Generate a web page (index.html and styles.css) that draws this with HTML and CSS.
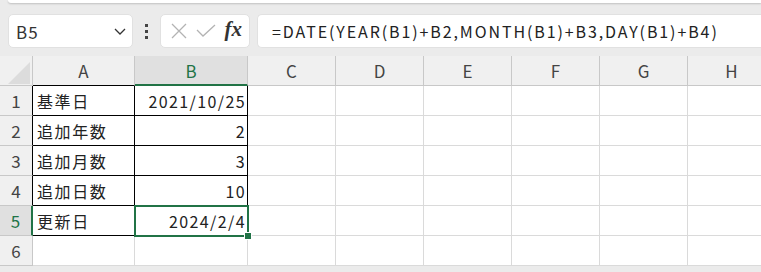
FILE: index.html
```html
<!DOCTYPE html>
<html>
<head>
    <title>Sheet</title>
    <link rel="stylesheet" href="styles.css">
</head>
<body>
<div class="ribbon-edge"></div>

<div class="toolbar">
    <div class="name-box">
        <span class="name-text">B5</span>
        <svg class="chevron" width="12" height="7" viewBox="0 0 12 7"><path d="M1 1 L6 6 L11 1" fill="none" stroke="#333" stroke-width="1.3"/></svg>
    </div>
    <div class="more">
        <span></span><span></span><span></span>
    </div>
    <div class="fx-box">
        <svg width="16" height="16" viewBox="0 0 16 16"><path d="M1 1 L15 15 M15 1 L1 15" stroke="#b3b3b3" stroke-width="1.3"/></svg>
        <svg width="20" height="14" viewBox="0 0 20 14"><path d="M1 6 L7 12 L19 1" fill="none" stroke="#b3b3b3" stroke-width="1.3"/></svg>
        <span class="fx">fx</span>
    </div>
    <div class="formula">=DATE(YEAR(B1)+B2,MONTH(B1)+B3,DAY(B1)+B4)</div>
</div>

<table class="sheet">
    <tr class="head">
        <th class="corner"><div class="tri"></div></th>
        <th class="col-a">A</th>
        <th class="col-b sel">B</th>
        <th>C</th>
        <th>D</th>
        <th>E</th>
        <th>F</th>
        <th>G</th>
        <th>H</th>
    </tr>
    <tr>
        <th class="rh box">1</th>
        <td class="a">基準日</td>
        <td class="b">2021/10/25</td>
        <td></td><td></td><td></td><td></td><td></td><td></td>
    </tr>
    <tr>
        <th class="rh box">2</th>
        <td class="a">追加年数</td>
        <td class="b">2</td>
        <td></td><td></td><td></td><td></td><td></td><td></td>
    </tr>
    <tr>
        <th class="rh box">3</th>
        <td class="a">追加月数</td>
        <td class="b">3</td>
        <td></td><td></td><td></td><td></td><td></td><td></td>
    </tr>
    <tr>
        <th class="rh box">4</th>
        <td class="a">追加日数</td>
        <td class="b">10</td>
        <td></td><td></td><td></td><td></td><td></td><td></td>
    </tr>
    <tr>
        <th class="rh sel-row">5</th>
        <td class="a">更新日</td>
        <td class="b active">2024/2/4<div class="cursor"><div class="handle"></div></div></td>
        <td></td><td></td><td></td><td></td><td></td><td></td>
    </tr>
    <tr>
        <th class="rh">6</th>
        <td></td>
        <td></td>
        <td></td><td></td><td></td><td></td><td></td><td></td>
    </tr>
</table>
</body>
</html>
```

FILE: styles.css
```css
body {
    margin: 0;
    background-color: #ebebeb;
    font-family: "Noto Sans CJK JP", sans-serif;
    color: #222222;
    overflow: hidden;
}

.ribbon-edge {
    height: 3px;
    margin-left: 8px;
    background-color: #ffffff;
    border-bottom-left-radius: 6px;
    box-shadow: 0 1px 2px rgba(0, 0, 0, 0.18);
}

.toolbar {
    display: flex;
    align-items: center;
    height: 34px;
    margin-top: 11px;
    padding-left: 8px;
}

.name-box,
.fx-box,
.formula {
    height: 34px;
    box-sizing: border-box;
    background-color: #ffffff;
    border: 1px solid #e1e1e1;
    border-radius: 5px;
    display: flex;
    align-items: center;
}

.name-box {
    width: 125px;
    padding: 0 6px 0 7px;
    justify-content: space-between;
}

.name-text {
    font-size: 17px;
    color: #333333;
    letter-spacing: 1px;
}

.more {
    width: 27px;
    display: flex;
    flex-direction: column;
    align-items: center;
    gap: 3px;
}

.more span {
    width: 3px;
    height: 3px;
    background-color: #444444;
}

.fx-box {
    width: 90px;
    padding: 0 7px 0 10px;
    justify-content: space-between;
}

.fx {
    font-family: "Liberation Serif", serif;
    font-style: italic;
    font-weight: bold;
    font-size: 21px;
    color: #333333;
    margin-top: -3px;
}

.formula {
    margin-left: 7px;
    flex: 1;
    padding-left: 14px;
    font-size: 16px;
    letter-spacing: 1.9px;
    white-space: nowrap;
    color: #222222;
    border-right: none;
    border-top-right-radius: 0;
    border-bottom-right-radius: 0;
}

.sheet {
    margin-top: 8px;
    border-collapse: separate;
    border-spacing: 0;
    table-layout: fixed;
    width: 776px;
    background-color: #ffffff;
    font-size: 16px;
}

.sheet tr {
    height: 30px;
}

.sheet th,
.sheet td {
    padding: 0;
    box-sizing: border-box;
    border-right: 1px solid #dadada;
    border-bottom: 1px solid #dadada;
}

.sheet th {
    font-weight: normal;
    background-color: #f0f0f0;
    color: #444444;
    border-color: #c8c8c8;
}

.head th {
    width: 88px;
    font-size: 17px;
}

.head .corner {
    width: 33px;
}

.tri {
    width: 0;
    height: 0;
    margin: 4px 0 0 8px;
    border-left: 22px solid transparent;
    border-bottom: 22px solid #dcdcdc;
}

.head .col-a {
    width: 102px;
    border-bottom-color: #000000;
}

.head .col-b {
    width: 113px;
}

.head .sel {
    background-color: #e0e0e0;
    color: #217346;
    border-bottom: 2px solid #217346;
}

.rh {
    font-size: 17px;
}

.rh.box {
    border-right-color: #000000;
}

.rh.sel-row {
    background-color: #e0e0e0;
    color: #217346;
    border-right: 2px solid #217346;
}

.sheet td.a {
    padding-left: 4px;
    letter-spacing: 1.6px;
    border-right-color: #000000;
    border-bottom-color: #000000;
}

.sheet td.b {
    text-align: right;
    padding-right: 1px;
    letter-spacing: 1.4px;
    border-right-color: #000000;
    border-bottom-color: #000000;
}

.active {
    position: relative;
}

.cursor {
    position: absolute;
    top: -1px;
    left: -1px;
    right: -2px;
    bottom: -2px;
    border: 2px solid #217346;
}

.handle {
    position: absolute;
    right: -5px;
    bottom: -5px;
    width: 6px;
    height: 6px;
    background-color: #217346;
    border: 1px solid #ffffff;
}
```
